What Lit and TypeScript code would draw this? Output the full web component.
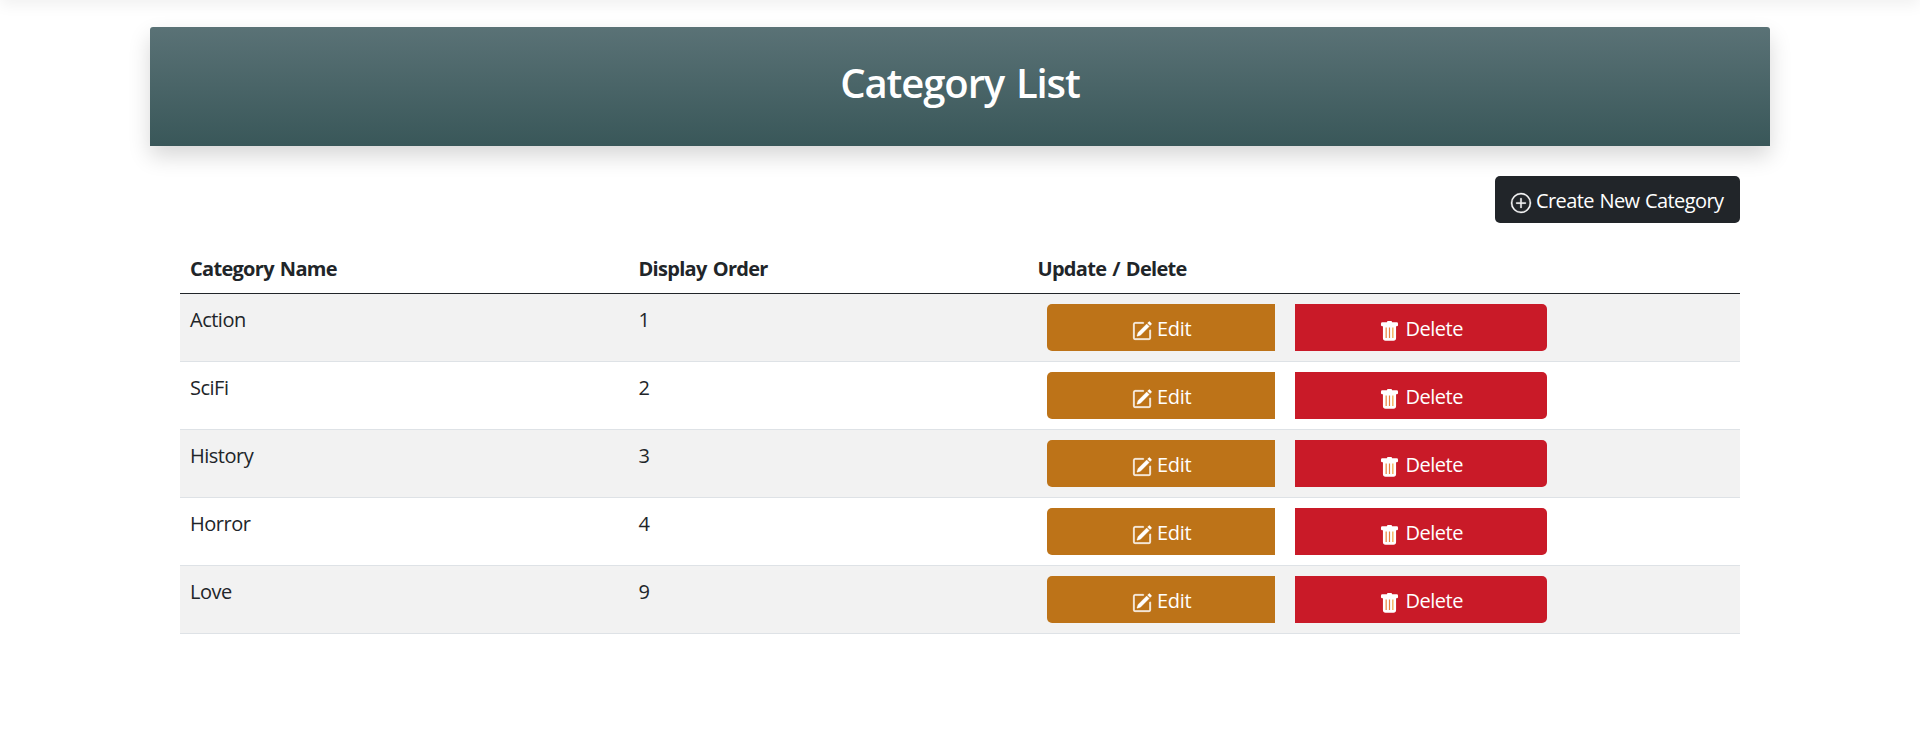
import { LitElement, html, css, svg } from "lit";
import { customElement, property } from "lit/decorators.js";

const plusCircle = svg`<path d="M8 15A7 7 0 1 1 8 1a7 7 0 0 1 0 14zm0 1A8 8 0 1 0 8 0a8 8 0 0 0 0 16z"/><path d="M8 4a.5.5 0 0 1 .5.5v3h3a.5.5 0 0 1 0 1h-3v3a.5.5 0 0 1-1 0v-3h-3a.5.5 0 0 1 0-1h3v-3A.5.5 0 0 1 8 4z"/>`;
const pencilSquare = svg`<path d="M15.502 1.94a.5.5 0 0 1 0 .706L14.459 3.69l-2-2L13.502.646a.5.5 0 0 1 .707 0l1.293 1.293zm-1.75 2.456-2-2L4.939 9.21a.5.5 0 0 0-.121.196l-.805 2.414a.25.25 0 0 0 .316.316l2.414-.805a.5.5 0 0 0 .196-.12l6.813-6.814z"/><path fill-rule="evenodd" d="M1 13.5A1.5 1.5 0 0 0 2.5 15h11a1.5 1.5 0 0 0 1.5-1.5v-6a.5.5 0 0 0-1 0v6a.5.5 0 0 1-.5.5h-11a.5.5 0 0 1-.5-.5v-11a.5.5 0 0 1 .5-.5H9a.5.5 0 0 0 0-1H2.5A1.5 1.5 0 0 0 1 2.5v11z"/>`;
const trashFill = svg`<path d="M2.5 1a1 1 0 0 0-1 1v1a1 1 0 0 0 1 1H3v9a2 2 0 0 0 2 2h6a2 2 0 0 0 2-2V4h.5a1 1 0 0 0 1-1V2a1 1 0 0 0-1-1H10a1 1 0 0 0-1-1H7a1 1 0 0 0-1 1H2.5z"/><path fill="#e8823c" d="M5 5h.9v8H5zM7.55 5h.9v8h-.9z"/><path fill="#f2a23c" d="M10.1 5h.9v8h-.9z"/>`;

@customElement("app-button")
class AppButton extends LitElement {
  @property() kind = "create";
  static styles = css`
    :host { display: block; }
    .btn { box-sizing: border-box; height: 47px; width: 100%; display: flex; align-items: flex-start; color: #fff; font: 400 20px/30px "Open Sans", "Noto Sans", sans-serif; white-space: nowrap; }
    svg { display: block; width: 20px; height: 20px; fill: currentColor; stroke: currentColor; stroke-width: 0.3; flex: none; overflow: visible; }
    .create { background: #212529; border-radius: 5px; padding: 10px 0 0 15.5px; gap: 5.5px; letter-spacing: -0.6px; word-spacing: 1px; }
    .create svg { margin-top: 6.5px; }
    .edit { background: #bd7318; border-radius: 5px 0 0 5px; padding: 10px 0 0 85px; gap: 5px; letter-spacing: -0.3px; }
    .edit svg { margin-top: 7px; }
    .delete { background: #c91a28; border-radius: 0 5px 5px 0; padding: 10px 0 0 84px; gap: 5.5px; letter-spacing: -0.5px; }
    .delete svg { width: 21px; height: 21px; margin-top: 7px; stroke: none; }
  `;
  render() {
    const icon = this.kind === "create" ? plusCircle : this.kind === "edit" ? pencilSquare : trashFill;
    return html`<div class="btn ${this.kind}"><svg viewBox="0 0 16 16">${icon}</svg><span class="label"><slot></slot></span></div>`;
  }
}

@customElement("app-root")
class AppRoot extends LitElement {
  rows: [string, number][] = [["Action", 1], ["SciFi", 2], ["History", 3], ["Horror", 4], ["Love", 9]];
  static styles = css`
    :host { display: block; background: #fff; color: #212529; font: 400 20px/30px "Open Sans", "Noto Sans", sans-serif; }
    .page { height: 744px; overflow: hidden; }
    .nav { height: 20px; margin-top: -20px; box-shadow: 0 5px 15px rgba(0, 0, 0, 0.06); }
    .card { width: 1620px; margin: 0 auto; padding-top: 27px; }
    .head { height: 119px; box-sizing: border-box; padding-top: 32px; border-radius: 3px 3px 0 0; background: linear-gradient(#5a7276, #395759); box-shadow: 0 10px 22px rgba(0, 0, 0, 0.16); text-align: center; }
    h1 { margin: 0; font-size: 40px; line-height: 48px; font-weight: 600; color: #fff; letter-spacing: -1.1px; word-spacing: 2.5px; }
    .body { padding: 30px 30px 0; }
    .bar { display: flex; justify-content: flex-end; }
    .bar app-button { width: 245px; }
    .row { display: grid; grid-template-columns: 448.5px 399px 712.5px; box-sizing: border-box; height: 68px; border-bottom: 1px solid #dee2e6; letter-spacing: -0.5px; }
    .row > * { padding: 11px 10px 0; }
    .row.odd { background: #f2f2f2; }
    .row.th { margin-top: 20px; height: 51px; font-weight: 700; border-bottom-color: #212529; letter-spacing: -0.7px; word-spacing: 1.5px; }
    .row .actions { display: grid; grid-template-columns: 228px 252px; gap: 20px; padding: 10px 0 0 19.5px; }
  `;
  render() {
    return html`<div class="page">
      <div class="nav"></div>
      <div class="card">
        <div class="head"><h1>Category List</h1></div>
        <div class="body">
          <div class="bar"><app-button kind="create">Create New Category</app-button></div>
          <div class="row th"><div>Category Name</div><div>Display Order</div><div>Update / Delete</div></div>
          ${this.rows.map(([name, order], i) => html`<div class="row ${i % 2 ? "" : "odd"}">
            <div>${name}</div><div>${order}</div>
            <div class="actions"><app-button kind="edit">Edit</app-button><app-button kind="delete">Delete</app-button></div>
          </div>`)}
        </div>
      </div>
    </div>`;
  }
}
